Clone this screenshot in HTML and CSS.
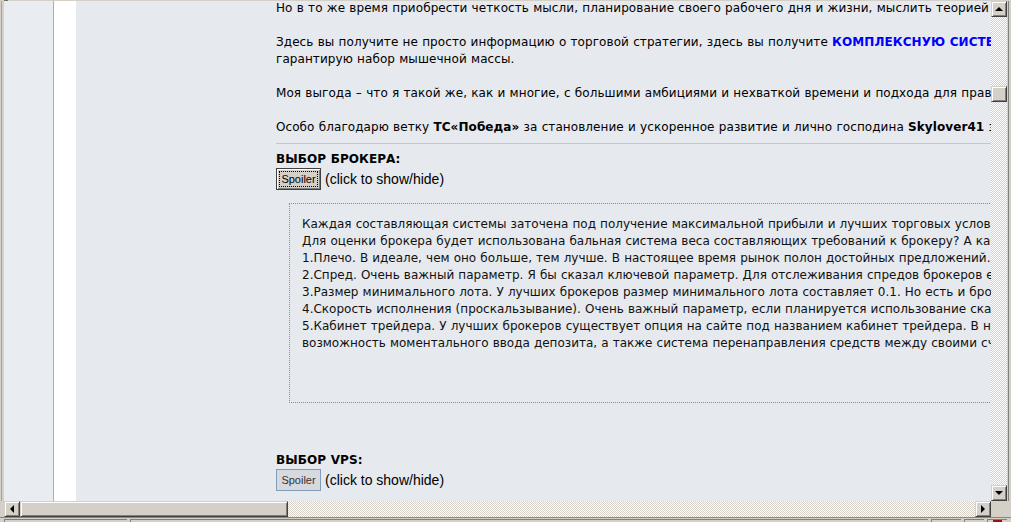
FILE: index.html
```html
<!DOCTYPE html>
<html lang="ru">
<head>
    <meta charset="UTF-8">
    <title>ТС — выбор брокера</title>
    <link rel="stylesheet" href="styles.css">
</head>
<body>
    <div class="screen">
        <div class="frame-top"><span class="frame-notch"></span></div>

        <div class="frame-middle">
            <div class="edge-left"></div>

            <div class="viewport">
                <div class="sidebar"></div>
                <div class="gutter"></div>

                <div class="post">
                    <p>Но в то же время приобрести четкость мысли, планирование своего рабочего дня и жизни, мыслить теорией вероятности и держать эмоции под контролем.</p>
                    <p>Здесь вы получите не просто информацию о торговой стратегии, здесь вы получите <a href="#" class="hl">КОМПЛЕКСНУЮ СИСТЕМУ</a> торговли, как в спортзале, где тренер<br>гарантирую набор мышечной массы.</p>
                    <p>Моя выгода – что я такой же, как и многие, с большими амбициями и нехваткой времени и подхода для правильной торговли на рынке.</p>
                    <p class="last">Особо благодарю ветку <b>ТС«Победа»</b> за становление и ускоренное развитие и лично господина <b>Skylover41</b> за терпение.</p>

                    <div class="divider"></div>

                    <div class="spoiler">
                        <div class="spoiler-title">ВЫБОР БРОКЕРА:</div>
                        <div class="spoiler-toggle">
                            <button class="spoiler-btn focused"><span>Spoiler</span></button>
                            <span class="spoiler-hint">(click to show/hide)</span>
                        </div>
                        <div class="spoiler-body">
                            Каждая составляющая системы заточена под получение максимальной прибыли и лучших торговых условий.<br>
                            Для оценки брокера будет использована бальная система веса составляющих требований к брокеру? А какие требования?<br>
                            1.Плечо. В идеале, чем оно больше, тем лучше. В настоящее время рынок полон достойных предложений.<br>
                            2.Спред. Очень важный параметр. Я бы сказал ключевой параметр. Для отслеживания спредов брокеров есть сервисы.<br>
                            3.Размер минимального лота. У лучших брокеров размер минимального лота составляет 0.1. Но есть и брокеры с 0.01.<br>
                            4.Скорость исполнения (проскальзывание). Очень важный параметр, если планируется использование скальпинга.<br>
                            5.Кабинет трейдера. У лучших брокеров существует опция на сайте под названием кабинет трейдера. В нем есть<br>
                            возможность моментального ввода депозита, а также система перенаправления средств между своими счетами.
                        </div>
                    </div>

                    <div class="spoiler vps">
                        <div class="spoiler-title">ВЫБОР VPS:</div>
                        <div class="spoiler-toggle">
                            <button class="spoiler-btn"><span>Spoiler</span></button>
                            <span class="spoiler-hint">(click to show/hide)</span>
                        </div>
                    </div>
                </div>
            </div>

            <div class="vscroll">
                <div class="sb-btn"><i class="arrow up"></i></div>
                <div class="sb-thumb v"></div>
                <div class="sb-btn bottom"><i class="arrow down"></i></div>
            </div>

            <div class="edge-right"></div>
        </div>

        <div class="frame-hscroll">
            <div class="hscroll">
                <div class="sb-btn"><i class="arrow left"></i></div>
                <div class="sb-thumb h"></div>
                <div class="sb-track"></div>
                <div class="sb-btn"><i class="arrow right"></i></div>
            </div>
            <div class="corner"></div>
        </div>

        <div class="statusbar">
            <div class="panel w1"></div>
            <div class="panel grow"></div>
            <div class="panel w2"></div>
            <div class="panel w3"></div>
            <div class="panel w3"><span class="tray-icon"></span></div>
        </div>
    </div>
</body>
</html>
```

FILE: styles.css
```css
body {
    margin: 0;
    background: #d4d0c8;
}

.screen {
    width: 1011px;
    height: 522px;
    display: flex;
    flex-direction: column;
    background: #d4d0c8;
    overflow: hidden;
}

/* window frame */
.frame-top {
    height: 1px;
    display: flex;
}

.frame-notch {
    width: 4px;
    margin-left: 4px;
    background: #6f6f6f;
}

.frame-middle {
    height: 500px;
    display: flex;
}

.edge-left {
    width: 4px;
    box-shadow: inset -2px 0 #d4d0c8, inset -3px 0 #a8a49c;
}

.edge-right {
    width: 4px;
    box-shadow: inset 1px 0 #d4d0c8, inset 2px 0 #808080;
}

/* page area */
.viewport {
    width: 987px;
    display: flex;
    overflow: hidden;
    background: #e6e9ee;
}

.sidebar {
    flex: none;
    width: 49px;
    background: #e9edf1;
    border-right: 1px solid #a9adb3;
}

.gutter {
    flex: none;
    width: 22px;
    background: #fff;
}

.post {
    flex: none;
    width: 1100px;
    padding-left: 200px;
    margin-top: -1px;
    font: 12px/17px "DejaVu Sans", Verdana, sans-serif;
    letter-spacing: 0.08px;
    word-spacing: 0.3px;
    color: #000;
    white-space: nowrap;
}

.post p {
    margin: 0 0 17px;
}

.post p.last {
    margin-bottom: 0;
}

.hl {
    color: #0000ff;
    font-weight: bold;
    text-decoration: none;
}

.divider {
    margin: 7px 0;
    border-top: 1px solid #c3c7cc;
}

.spoiler-title {
    font-weight: bold;
}

.spoiler-toggle {
    display: flex;
    align-items: center;
    gap: 4px;
    letter-spacing: 0;
    word-spacing: 0;
}

.spoiler-btn {
    width: 45px;
    height: 22px;
    padding: 0;
    background: #d4d0c8;
    border: 1px solid #404040;
    box-shadow: inset 1px 1px #fff, inset -1px -1px #808080;
    font: 11px "Liberation Sans", Arial, sans-serif;
    color: #000;
}

.spoiler-btn.focused span {
    display: block;
    margin: 0 3px;
    line-height: 14px;
    outline: 1px dotted #000;
}

.vps .spoiler-btn {
    background: #d6d9dd;
    border-color: #7f9db9;
    box-shadow: none;
    color: #333;
}

.spoiler-hint {
    font: 14px "Liberation Sans", Arial, sans-serif;
    color: #000;
}

.spoiler-body {
    margin: 13px 0 0 13px;
    padding: 12px 12px 50px;
    border: 1px dotted #8c8c8c;
    letter-spacing: 0;
    color: #111;
}

.spoiler.vps {
    margin-top: 49px;
}

/* scrollbars */
.vscroll {
    width: 16px;
    display: flex;
    flex-direction: column;
    background: repeating-conic-gradient(#d4d0c8 0 25%, #fff 0 50%) 0 0 / 2px 2px;
}

.hscroll {
    width: 987px;
    display: flex;
    background: repeating-conic-gradient(#d4d0c8 0 25%, #fff 0 50%) 0 0 / 2px 2px;
}

.sb-btn,
.sb-thumb {
    flex: none;
    box-sizing: border-box;
    background: #d4d0c8;
    border: 1px solid;
    border-color: #d4d0c8 #404040 #404040 #d4d0c8;
    box-shadow: inset 1px 1px #fff, inset -1px -1px #808080;
}

.sb-btn {
    width: 16px;
    height: 16px;
    display: flex;
    align-items: center;
    justify-content: center;
}

.sb-btn.bottom {
    margin-top: auto;
}

.sb-thumb.v {
    height: 16px;
    margin-top: 69px;
}

.sb-thumb.h {
    width: 268px;
}

.sb-track {
    flex: 1;
}

.arrow {
    width: 0;
    height: 0;
    border: 4px solid transparent;
}

.arrow.up {
    border-top: 0;
    border-bottom-color: #000;
}

.arrow.down {
    border-bottom: 0;
    border-top-color: #000;
}

.arrow.left {
    border-left: 0;
    border-right-color: #000;
}

.arrow.right {
    border-right: 0;
    border-left-color: #000;
}

.frame-hscroll {
    height: 16px;
    display: flex;
    padding-left: 4px;
}

.corner {
    width: 16px;
    background: #d4d0c8;
}

/* status bar */
.statusbar {
    height: 5px;
    display: flex;
    gap: 3px;
    padding: 1px 4px 0;
    border-top: 1px solid #8a8780;
    box-sizing: border-box;
}

.panel {
    border-top: 1px solid #808080;
    border-left: 1px solid #808080;
}

.panel.w1 { width: 122px; }
.panel.grow { flex: 1; }
.panel.w2 { width: 29px; }
.panel.w3 { width: 19px; }

.tray-icon {
    display: block;
    width: 9px;
    height: 3px;
    margin-left: 5px;
    background: #a01010;
}
```
